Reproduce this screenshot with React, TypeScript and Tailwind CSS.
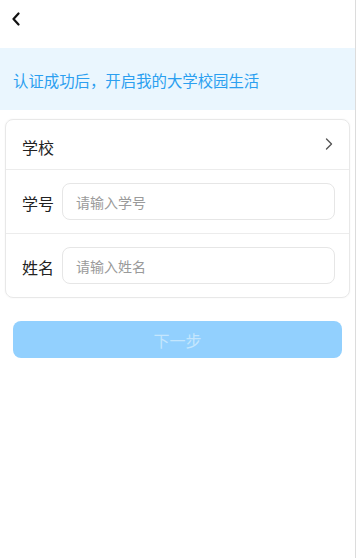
import React from 'react';

const font = { fontFamily: '"Noto Sans CJK SC", "Noto Sans", sans-serif' };

function Back() {
    return (
        <svg width="10" height="14" viewBox="0 0 10 14" fill="none">
            <path d="M7.5 1.5 L2.5 7 L7.5 12.5" stroke="#111" strokeWidth="2.2" strokeLinecap="round" strokeLinejoin="round" />
        </svg>
    );
}

function Chevron() {
    return (
        <svg width="8" height="12" viewBox="0 0 8 12" fill="none">
            <path d="M1.5 1 L6.5 6 L1.5 11" stroke="#555" strokeWidth="1.4" strokeLinecap="round" strokeLinejoin="round" />
        </svg>
    );
}

function InputRow({ label, placeholder }: { label: string; placeholder: string }) {
    return (
        <div className="flex h-[63px] items-center pl-4 pr-[14px]">
            <span className="w-[40px] shrink-0 pt-[3px] text-[16px] text-[#222]">{label}</span>
            <input
                className="h-[37px] flex-1 rounded-lg border border-[#e6e6e6] bg-white px-[13px] text-[14px] text-[#333] outline-none placeholder:text-[#9a9a9a]"
                placeholder={placeholder}
                style={font}
            />
        </div>
    );
}

export default function App() {
    return (
        <div className="h-[558px] w-[357px] overflow-hidden bg-white" style={font}>
            <div className="h-full w-[356px] border-r border-[#dcdcdc]">
                <div className="flex h-[48px] items-start pl-[11px] pt-[12px]">
                    <Back />
                </div>

                {/* 안내 배너 */}
                <div className="flex h-[62px] items-center bg-[#eaf6fe] pl-[13px] pt-[3px]">
                    <span className="text-[15.4px] text-[#2b9ff0]">认证成功后，开启我的大学校园生活</span>
                </div>

                <div className="mx-[5px] mt-[9px] rounded-lg border border-[#e8e8e8] shadow-[0_0_2px_rgba(0,0,0,0.06)]">
                    <div className="flex h-[49px] items-center justify-between pl-4 pr-[16px]">
                        <span className="pt-[4px] text-[16px] text-[#222]">学校</span>
                        <span className="-mt-[1px]"><Chevron /></span>
                    </div>
                    <div className="h-px bg-[#ececec]" />
                    <InputRow label="学号" placeholder="请输入学号" />
                    <div className="h-px bg-[#ececec]" />
                    <InputRow label="姓名" placeholder="请输入姓名" />
                </div>

                <div className="mx-[13px] mt-[23px]">
                    <button
                        className="flex h-[37px] w-full items-center justify-center rounded-lg bg-[#92d0fe] text-[16px] text-[#c4e6fd]"
                        style={font}
                    >
                        下一步
                    </button>
                </div>
            </div>
        </div>
    );
}
